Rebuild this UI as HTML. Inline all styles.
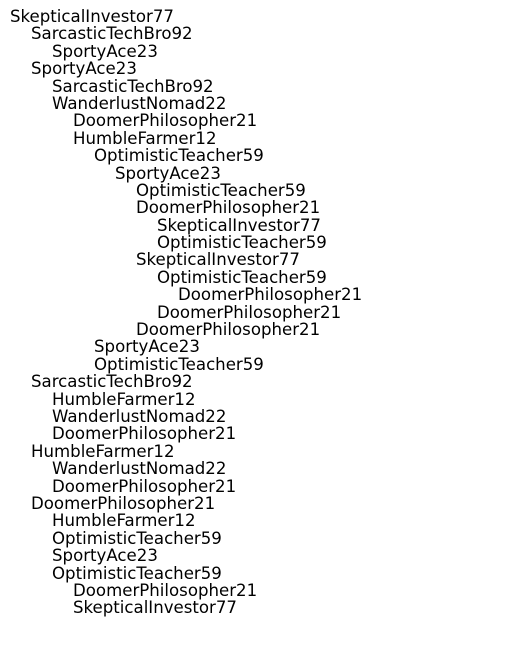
<!DOCTYPE html>
<html><head><meta charset="utf-8"><style>
html,body{margin:0;padding:0;background:#fff;width:515px;height:643px;overflow:hidden}
body{font-family:"DejaVu Sans","Liberation Sans",sans-serif;font-size:16.6px;color:#000;padding-top:8px}
div{line-height:17.4px;height:17.4px;white-space:nowrap}
.l0{padding-left:10px}.l1{padding-left:31px}.l2{padding-left:52px}.l3{padding-left:73px}
.l4{padding-left:94px}.l5{padding-left:115px}.l6{padding-left:136px}.l7{padding-left:157px}.l8{padding-left:178px}
</style></head><body>
<div class="l0">SkepticalInvestor77</div>
<div class="l1">SarcasticTechBro92</div>
<div class="l2">SportyAce23</div>
<div class="l1">SportyAce23</div>
<div class="l2">SarcasticTechBro92</div>
<div class="l2">WanderlustNomad22</div>
<div class="l3">DoomerPhilosopher21</div>
<div class="l3">HumbleFarmer12</div>
<div class="l4">OptimisticTeacher59</div>
<div class="l5">SportyAce23</div>
<div class="l6">OptimisticTeacher59</div>
<div class="l6">DoomerPhilosopher21</div>
<div class="l7">SkepticalInvestor77</div>
<div class="l7">OptimisticTeacher59</div>
<div class="l6">SkepticalInvestor77</div>
<div class="l7">OptimisticTeacher59</div>
<div class="l8">DoomerPhilosopher21</div>
<div class="l7">DoomerPhilosopher21</div>
<div class="l6">DoomerPhilosopher21</div>
<div class="l4">SportyAce23</div>
<div class="l4">OptimisticTeacher59</div>
<div class="l1">SarcasticTechBro92</div>
<div class="l2">HumbleFarmer12</div>
<div class="l2">WanderlustNomad22</div>
<div class="l2">DoomerPhilosopher21</div>
<div class="l1">HumbleFarmer12</div>
<div class="l2">WanderlustNomad22</div>
<div class="l2">DoomerPhilosopher21</div>
<div class="l1">DoomerPhilosopher21</div>
<div class="l2">HumbleFarmer12</div>
<div class="l2">OptimisticTeacher59</div>
<div class="l2">SportyAce23</div>
<div class="l2">OptimisticTeacher59</div>
<div class="l3">DoomerPhilosopher21</div>
<div class="l3">SkepticalInvestor77</div>
</body></html>
